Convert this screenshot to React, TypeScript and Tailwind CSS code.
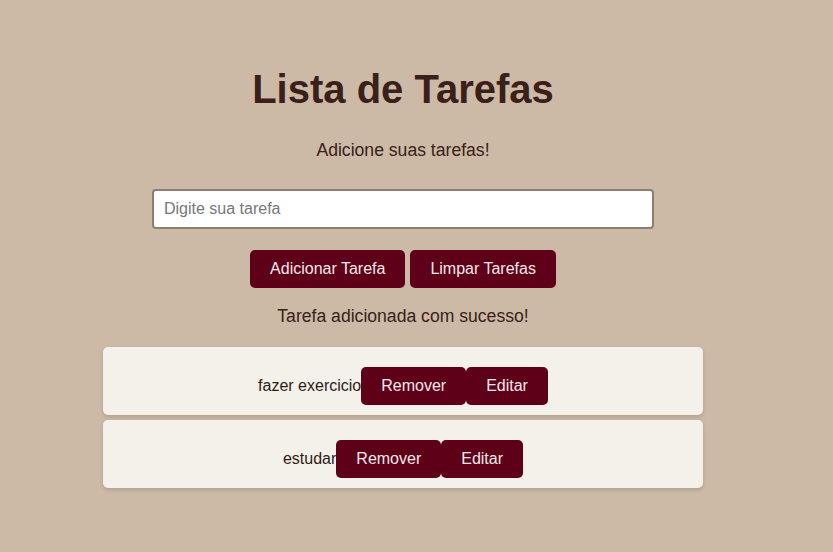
import { useState } from "react";

type Task = { id: number; text: string };

export default function App() {
  const [tasks, setTasks] = useState<Task[]>([
    { id: 1, text: "fazer exercicio" },
    { id: 2, text: "estudar" },
  ]);
  const [value, setValue] = useState("");
  const [message, setMessage] = useState("Tarefa adicionada com sucesso!");

  const add = () => {
    if (!value.trim()) return;
    setTasks([...tasks, { id: Date.now(), text: value.trim() }]);
    setValue("");
    setMessage("Tarefa adicionada com sucesso!");
  };

  const btn =
    "bg-[#5f0019] text-[#f4e9ea] text-[16px] leading-[18px] px-[20px] py-[10px] rounded-[5px]";

  return (
    <div className="min-h-screen bg-[#ccbaa6] font-['Liberation_Sans',Arial,sans-serif] text-[#3a2018]">
      <div className="w-[806px] flex flex-col items-center pt-[66px]">
        <h1 className="text-[40px] leading-[46px] font-bold">Lista de Tarefas</h1>
        <p className="text-[17.6px] leading-[20px] mt-[28px]">Adicione suas tarefas!</p>

        <input
          value={value}
          onChange={(e) => setValue(e.target.value)}
          placeholder="Digite sua tarefa"
          className="mt-[29px] w-[502px] h-[40px] bg-white border-2 border-[#8b7e72] rounded-[4px] px-[10px] text-[16px] text-[#222] placeholder:text-[#777] outline-none"
        />

        <div className="flex gap-[5px] mt-[21px]">
          <button className={btn} onClick={add}>
            Adicionar Tarefa
          </button>
          <button
            className={btn}
            onClick={() => {
              setTasks([]);
              setMessage("");
            }}
          >
            Limpar Tarefas
          </button>
        </div>

        <p className="text-[17.6px] leading-[20px] mt-[18px] h-[20px]">{message}</p>

        <ul className="w-[600px] flex flex-col gap-[5px] mt-[21px]">
          {tasks.map((t) => (
            <li
              key={t.id}
              className="bg-[#f4f0ea] rounded-[5px] shadow-[0_2px_4px_rgba(0,0,0,0.15)] pt-[20px] pb-[10px] flex items-baseline justify-center text-[16px] text-[#2e1c16]"
            >
              <span>{t.text}</span>
              <button
                className={btn}
                onClick={() => setTasks(tasks.filter((x) => x.id !== t.id))}
              >
                Remover
              </button>
              <button className={btn}>Editar</button>
            </li>
          ))}
        </ul>
      </div>
    </div>
  );
}
